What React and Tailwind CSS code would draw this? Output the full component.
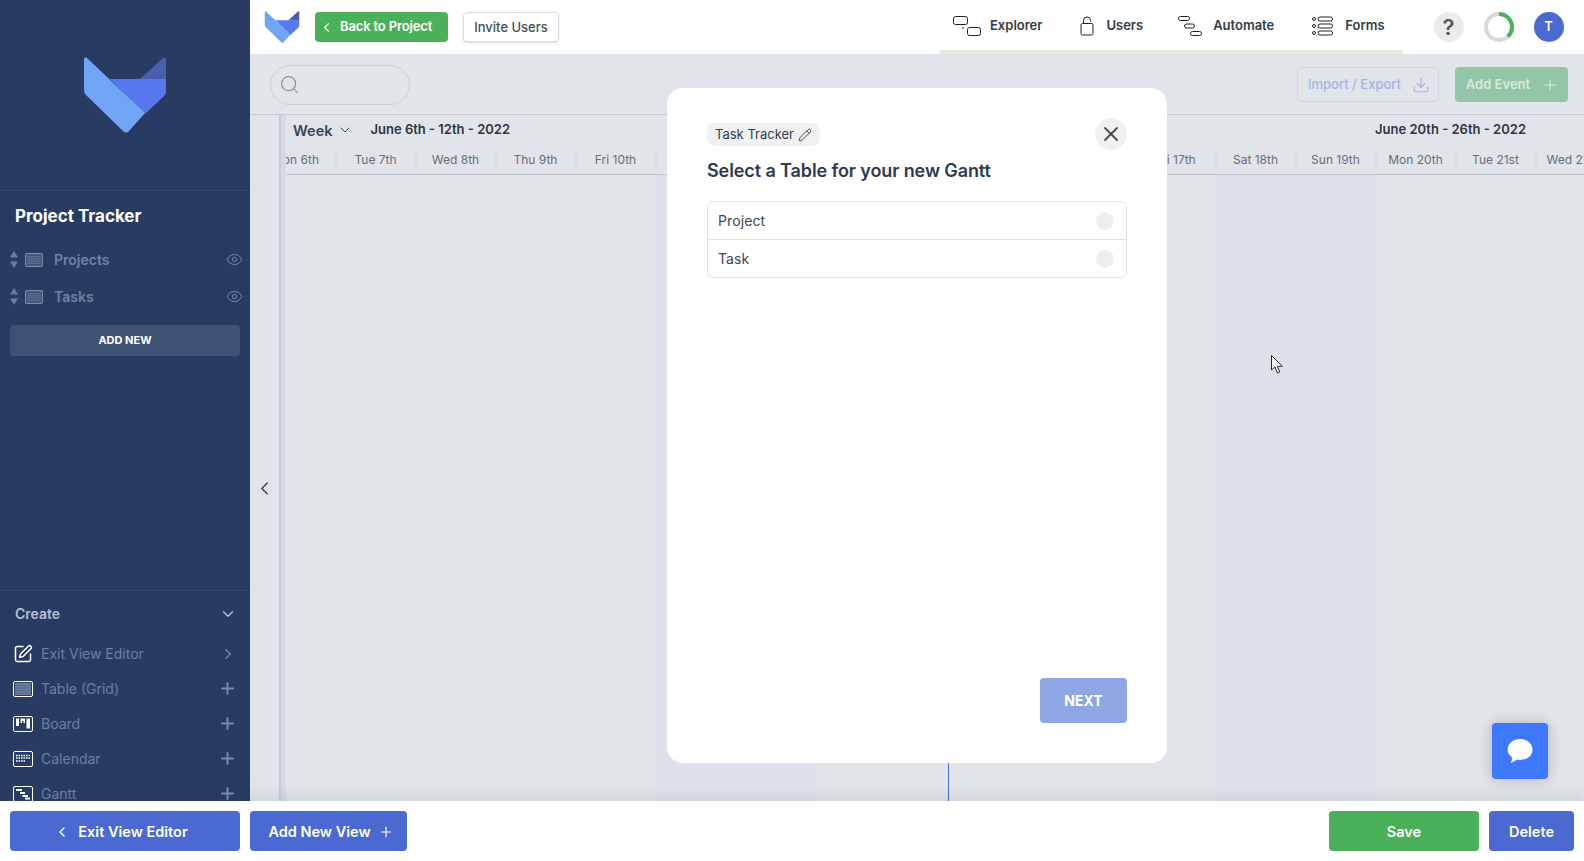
import React from 'react';
import { ChevronDown, ChevronLeft, ChevronRight, Download, Eye, Pencil, Plus, Search, SquarePen, X } from 'lucide-react';

const days = [
  'Mon 6th', 'Tue 7th', 'Wed 8th', 'Thu 9th', 'Fri 10th', 'Sat 11th', 'Sun 12th', 'Mon 13th', 'Tue 14th', 'Wed 15th',
  'Thu 16th', 'Fri 17th', 'Sat 18th', 'Sun 19th', 'Mon 20th', 'Tue 21st', 'Wed 22nd',
];

const Logo = ({ className, dark = '#4a5eaf' }) => (
  <svg viewBox="84 57 82 76" className={className}>
    <path d="M140 79 L163 58 Q166 56 166 60 L166 80 Z" fill={dark} />
    <path d="M110 79 L166 79 L166 92 Q166 94 164 96 L145 114 Z" fill="#5679ee" />
    <path d="M84 60 Q84 56 87 58 L145 113 L129 131 Q126 134 123 131 L86 95 Q84 93 84 90 Z" fill="#70a5f5" />
  </svg>
);

const SortArrows = () => (
  <svg viewBox="0 0 8 17" className="w-2 h-[17px] shrink-0" fill="#6d7c99">
    <path d="M4 0 L8 6.5 L0 6.5 Z" />
    <path d="M4 17 L8 10.5 L0 10.5 Z" />
  </svg>
);

const TableIcon = () => (
  <svg viewBox="0 0 17 13" className="w-[18px] h-[14px] shrink-0" fill="none">
    <rect x="0.5" y="0.5" width="16" height="12" rx="1" stroke="#7a89a5" fill="#3f5277" />
    <path d="M2 3.5 H15 M2 5.5 H15 M2 7.5 H15 M2 9.5 H15" stroke="#6f7f9d" strokeWidth="0.8" />
  </svg>
);

const GridIcon = () => (
  <svg viewBox="0 0 20 16" className="w-5 h-4" fill="none">
    <rect x="0.5" y="0.5" width="19" height="15" rx="1.5" stroke="#fff" />
    <rect x="2" y="2" width="16" height="12" fill="#6f7f9d" />
    <path d="M2 4.5 H18 M2 7 H18 M2 9.5 H18 M2 12 H18" stroke="#4a5c80" strokeWidth="0.7" />
  </svg>
);

const BoardIcon = () => (
  <svg viewBox="0 0 20 16" className="w-5 h-4" fill="none">
    <rect x="0.5" y="0.5" width="19" height="15" rx="1.5" stroke="#fff" />
    <path d="M3 2.5 H6 V10 H3 Z M7.5 2.5 H12 V7 H10.5 V5 H9 V7 H7.5 Z M13.5 2.5 H17 V12.5 H13.5 Z" fill="#fff" />
  </svg>
);

const CalendarIcon = () => (
  <svg viewBox="0 0 20 16" className="w-5 h-4" fill="none">
    <rect x="0.5" y="0.5" width="19" height="15" rx="1.5" stroke="#fff" />
    <path d="M3 4.5 H17 M3 7 H17" stroke="#fff" strokeWidth="1.4" strokeDasharray="1.6 0.9" />
    <path d="M3 10 H12" stroke="#fff" strokeWidth="1.4" strokeDasharray="1.6 0.9" />
  </svg>
);

const GanttIcon = () => (
  <svg viewBox="0 0 20 16" className="w-5 h-4" fill="none">
    <rect x="0.5" y="0.5" width="19" height="15" rx="1.5" stroke="#fff" />
    <path d="M3 3 H9 V5 H3 Z M7 6 H12 V8 H7 Z M9.5 9 H15 V11 H9.5 Z M12 11.5 H17 V13.5 H12 Z" fill="#fff" />
  </svg>
);

const ExplorerIcon = () => (
  <svg viewBox="0 0 28 20" className="w-7 h-5" fill="none" stroke="#222">
    <rect x="0.5" y="0.5" width="14" height="8" rx="2" />
    <rect x="14.5" y="11.5" width="13" height="8" rx="2" />
    <path d="M9.5 11.5 L10.5 12.5" strokeWidth="1.4" />
  </svg>
);

const LockIcon = () => (
  <svg viewBox="0 0 14 20" className="w-[14px] h-5" fill="none" stroke="#222">
    <rect x="1" y="7.5" width="12" height="11.5" rx="1.5" />
    <path d="M3.5 7.5 V4.5 A3.5 3.5 0 0 1 10.5 4.5 V5.5" />
  </svg>
);

const AutomateIcon = () => (
  <svg viewBox="0 0 24 20" className="w-6 h-5" fill="none" stroke="#222">
    <rect x="0.5" y="0.5" width="11" height="4" rx="2" />
    <rect x="6.5" y="8" width="10" height="4" rx="2" />
    <rect x="12.5" y="15.5" width="11" height="4" rx="2" />
  </svg>
);

const FormsIcon = () => (
  <svg viewBox="0 0 21 20" className="w-[21px] h-5" fill="none" stroke="#222">
    <circle cx="2" cy="3" r="1.5" />
    <circle cx="2" cy="10" r="1.5" />
    <circle cx="2" cy="17" r="1.5" />
    <rect x="6" y="1" width="14.5" height="4" rx="2" />
    <rect x="6" y="8" width="14.5" height="4" rx="2" />
    <rect x="6" y="15" width="14.5" height="4" rx="2" />
  </svg>
);

const Ring = () => (
  <svg viewBox="0 0 30 30" className="w-[30px] h-[30px]" fill="none">
    <circle cx="15" cy="15" r="13" stroke="#d9d9d9" strokeWidth="4" />
    <circle cx="15" cy="15" r="13" stroke="#4bb05a" strokeWidth="4" strokeDasharray="31 82" transform="rotate(-90 15 15)" />
  </svg>
);

const CreateRow = ({ icon, label, arrow }) => (
  <div className="h-[35px] flex items-center justify-between pl-[13px] pr-[13px] shrink-0">
    <div className="flex items-center">
      <span className="w-5 flex justify-center">{icon}</span>
      <span className="ml-[8px] text-[14px] text-[#6f7f9d]">{label}</span>
    </div>
    {arrow ? <ChevronRight size={18} strokeWidth={1.5} className="text-[#7a89a5]" /> : <Plus size={19} strokeWidth={2.5} className="text-[#7a89a5]" />}
  </div>
);

const ViewRow = ({ label }) => (
  <div className="h-[37px] flex items-center pl-[10px] pr-[7px]">
    <SortArrows />
    <span className="ml-[7px]"><TableIcon /></span>
    <span className="ml-[11px] text-[14px] font-semibold text-[#72829f]">{label}</span>
    <Eye size={17} strokeWidth={1.4} className="ml-auto text-[#7a89a5]" />
  </div>
);

const NavItem = ({ icon, label, className }) => (
  <div className={`flex items-center ${className}`}>
    {icon}
    <span className="text-[13px] font-semibold text-[#333b47]">{label}</span>
  </div>
);

const App = () => {
  return (
    <div className="h-screen w-screen overflow-hidden flex flex-col relative font-['Inter',sans-serif]">
      <div className="flex flex-1 min-h-0">
        {/* Sidebar */}
        <aside className="w-[250px] shrink-0 bg-[#283c63] flex flex-col relative z-20">
          <div className="h-[191px] shrink-0 flex items-start justify-center pt-[57px] border-b border-[#33476d]">
            <Logo className="w-[82px] h-[76px]" />
          </div>
          <div className="text-[17px] leading-[22px] font-bold text-white pl-[15px] pt-[14px] pb-[14px]">Project Tracker</div>
          <ViewRow label="Projects" />
          <ViewRow label="Tasks" />
          <button className="mx-[10px] mt-[10px] h-[31px] rounded bg-[#3e5373] text-white text-[11px] font-bold">ADD NEW</button>
          <div className="mt-auto h-[211px] border-t border-[#33476d] overflow-hidden flex flex-col">
            <div className="h-[45px] shrink-0 flex items-center justify-between pl-[15px] pr-[13px]">
              <span className="text-[14px] font-semibold text-[#b6bfcf]">Create</span>
              <ChevronDown size={18} strokeWidth={1.5} className="text-[#c4ccd9]" />
            </div>
            <div className="flex flex-col">
              <CreateRow icon={<SquarePen size={20} strokeWidth={1.8} className="text-white" />} label="Exit View Editor" arrow />
              <CreateRow icon={<GridIcon />} label="Table (Grid)" />
              <CreateRow icon={<BoardIcon />} label="Board" />
              <CreateRow icon={<CalendarIcon />} label="Calendar" />
              <CreateRow icon={<GanttIcon />} label="Gantt" />
            </div>
          </div>
        </aside>

        {/* Main */}
        <main className="flex-1 min-w-0 flex flex-col relative bg-[#e1e4e9]">
          <header className="h-[54px] shrink-0 bg-white flex items-center relative pl-[14px]">
            <Logo className="w-[36px] h-[32px]" />
            <button className="ml-[15px] h-[30px] w-[133px] rounded bg-[#4bb05a] text-white text-[13px] font-semibold tracking-[-0.15px] flex items-center pl-[4px] gap-[6px]">
              <ChevronLeft size={15} strokeWidth={1.8} />Back to Project
            </button>
            <button className="ml-[15px] h-[30px] w-[96px] pt-[1px] rounded border border-[#dcdde0] shadow-sm bg-white text-[13px] font-medium text-[#444c5c]">Invite Users</button>
            <NavItem icon={<ExplorerIcon />} label="Explorer" className="ml-[394px] gap-[9px] pb-[3px]" />
            <NavItem icon={<LockIcon />} label="Users" className="ml-[38px] gap-[12px] pb-[3px]" />
            <NavItem icon={<AutomateIcon />} label="Automate" className="ml-[35px] gap-[11px] pb-[3px]" />
            <NavItem icon={<FormsIcon />} label="Forms" className="ml-[38px] gap-[12px] pb-[3px]" />
            <div className="ml-[49px] w-[30px] h-[30px] rounded-full bg-[#ebebeb] flex items-center justify-center text-[22px] font-semibold text-[#5a5a5a]">?</div>
            <div className="ml-[20px]"><Ring /></div>
            <div className="ml-[20px] w-[30px] h-[30px] rounded-full bg-[#4a69d1] flex items-center justify-center text-white text-[13px] font-semibold">T</div>
            <div className="absolute left-[690px] bottom-0 w-[463px] h-[4px] bg-[#dcefe0]" />
          </header>

          <div className="h-[61px] shrink-0 flex items-center pl-[20px] pr-[16px] border-b border-[#c8ccd2] pt-[1px]">
            <div className="w-[140px] h-[40px] rounded-full border border-[#ccd0d6] flex items-center pl-[8px]">
              <Search size={21} strokeWidth={1.4} className="text-[#8e9297]" />
            </div>
            <button className="ml-auto w-[142px] h-[35px] pl-[2px] rounded border border-[#ccd4e8] text-[13px] font-medium text-[#a1b4e6] flex items-center justify-center gap-[11px]">
              Import / Export<Download size={18} strokeWidth={1.5} />
            </button>
            <button className="ml-[16px] w-[113px] h-[35px] pl-[2px] rounded bg-[#93c6a6] text-[13px] font-semibold text-[#d7e9de] flex items-center justify-center gap-[11px]">
              Add Event<Plus size={18} strokeWidth={1.5} />
            </button>
          </div>

          <div className="flex-1 min-h-0 flex">
            <div className="w-[29px] shrink-0 pt-[363px] pl-[4px]">
              <ChevronLeft size={21} strokeWidth={2} className="text-[#3f4d66]" />
            </div>
            <div className="w-[2px] shrink-0 bg-[#c8ccd2]" />
            <div className="w-[5px] shrink-0 bg-[#d3dae6]" />
            <div className="flex-1 min-w-0 overflow-hidden flex flex-col">
              <div className="h-[60px] shrink-0 border-b border-[#c0c4ca] flex flex-col">
                <div className="h-[29px] flex items-center pl-[7px] pr-[58px]">
                  <span className="text-[14.5px] font-semibold text-[#3b4658] pt-[3px]">Week</span>
                  <ChevronDown size={16} strokeWidth={1.5} className="ml-[5px] text-[#3b4658]" />
                  <span className="ml-[17px] text-[13px] font-semibold text-[#2f3541]">June 6th - 12th - 2022</span>
                  <span className="ml-auto text-[13px] font-semibold text-[#2f3541]">June 20th - 26th - 2022</span>
                </div>
                <div className="flex items-center ml-[-29px] h-[20px] mt-[6px]">
                  {days.map((day) => (
                    <React.Fragment key={day}>
                      <span className="w-[77px] shrink-0 text-center text-[12px] whitespace-nowrap text-[#666e7c]">{day}</span>
                      <span className="w-[3px] h-[18px] shrink-0 rounded-sm bg-[#dcdfe4]" />
                    </React.Fragment>
                  ))}
                </div>
              </div>
              <div className="flex-1 min-h-0 flex ml-[-31px]">
                {days.map((day) => {
                  const weekend = day.startsWith('Sat') || day.startsWith('Sun');
                  return (
                    <div key={day} className={`w-[80px] shrink-0 relative ${weekend ? 'bg-[#dee1e9]' : ''}`}>
                      {day === 'Tue 14th' && <div className="absolute left-[53px] top-0 bottom-0 w-px bg-[#4a69d1]" />}
                    </div>
                  );
                })}
              </div>
            </div>
          </div>

          {/* Chat button */}
          <button className="absolute right-[36px] bottom-[22px] w-[56px] h-[56px] rounded bg-[#3f78ff] shadow-[0_0_14px_rgba(0,0,0,0.22)] flex items-center justify-center z-10">
            <svg viewBox="0 0 26 26" className="w-[26px] h-[26px]" fill="#fff">
              <path d="M13 1 C20 1 25.5 5.8 25.5 11.8 C25.5 17.8 20 22 13 22 C11.8 22 10.8 21.9 9.8 21.6 C8 23.2 6 24.4 3.6 25 C4.6 23 5.2 21.2 5.2 19.4 C2.4 17.4 0.6 14.8 0.6 11.8 C0.6 5.8 6 1 13 1 Z" />
            </svg>
          </button>

          {/* Modal */}
          <div className="absolute inset-0 flex justify-center items-start pt-[88px] pointer-events-none">
            <div className="w-[500px] h-[675px] bg-white rounded-2xl px-[40px] pt-[30px] pb-[40px] flex flex-col pointer-events-auto">
              <div className="flex items-center justify-between">
                <div className="h-[23px] rounded-lg bg-[#f1f1f1] px-[8px] flex items-center gap-[4px] text-[13px] text-[#333b4b] mt-[1px]">
                  Task Tracker<Pencil size={14} strokeWidth={1.5} />
                </div>
                <button className="w-[32px] h-[32px] rounded-full bg-[#f1f1f1] flex items-center justify-center text-[#4a4a4a]">
                  <X size={24} strokeWidth={1.8} />
                </button>
              </div>
              <h2 className="mt-[9px] text-[18px] leading-[24px] font-semibold tracking-[-0.1px] text-[#2e3a4e]">Select a Table for your new Gantt</h2>
              <div className="mt-[18px] border border-[#e2e2e6] rounded-md">
                <div className="h-[38px] flex items-center justify-between pl-[10px] pr-[12px] border-b border-[#e2e2e6] text-[14px] tracking-[0.1px] text-[#3f4654]">
                  Project<span className="w-[18px] h-[18px] rounded-full bg-[#efefef]" />
                </div>
                <div className="h-[37px] flex items-center justify-between pl-[10px] pr-[12px] text-[14px] tracking-[0.1px] text-[#3f4654]">
                  Task<span className="w-[18px] h-[18px] rounded-full bg-[#efefef]" />
                </div>
              </div>
              <button className="mt-auto self-end w-[87px] h-[45px] rounded bg-[#8ea7e4] text-white text-[14px] font-bold">NEXT</button>
            </div>
          </div>
        </main>
      </div>

      {/* Bottom bar */}
      <footer className="h-[60px] shrink-0 bg-white flex items-center px-[10px] relative z-10 shadow-[0_-6px_14px_rgba(0,0,0,0.07)]">
        <button className="w-[230px] h-[40px] pt-[1px] rounded bg-[#4a69d1] text-white text-[14.5px] font-semibold flex items-center justify-center gap-[8px] pr-[8px]">
          <ChevronLeft size={16} strokeWidth={2} />Exit View Editor
        </button>
        <button className="ml-[10px] w-[157px] h-[40px] pt-[1px] pl-[5px] rounded bg-[#4a69d1] text-white text-[14.5px] font-semibold flex items-center justify-center gap-[7px]">
          Add New View<Plus size={16} strokeWidth={1.8} />
        </button>
        <button className="ml-auto w-[150px] h-[40px] pt-[1px] rounded bg-[#4bb05a] text-white text-[14.5px] font-semibold">Save</button>
        <button className="ml-[10px] w-[85px] h-[40px] pt-[1px] rounded bg-[#4a69d1] text-white text-[14.5px] font-semibold">Delete</button>
      </footer>

      {/* Mouse pointer */}
      <svg viewBox="0 0 12 19" className="absolute left-[1271px] top-[355px] w-[12px] h-[19px] z-30" fill="#fff" stroke="#111" strokeWidth="0.9">
        <path d="M0.5 0.5 V15 L4 12 L6.5 18 L8.8 17 L6.4 11.4 L11.2 11.2 Z" />
      </svg>
    </div>
  );
};

export default App;
